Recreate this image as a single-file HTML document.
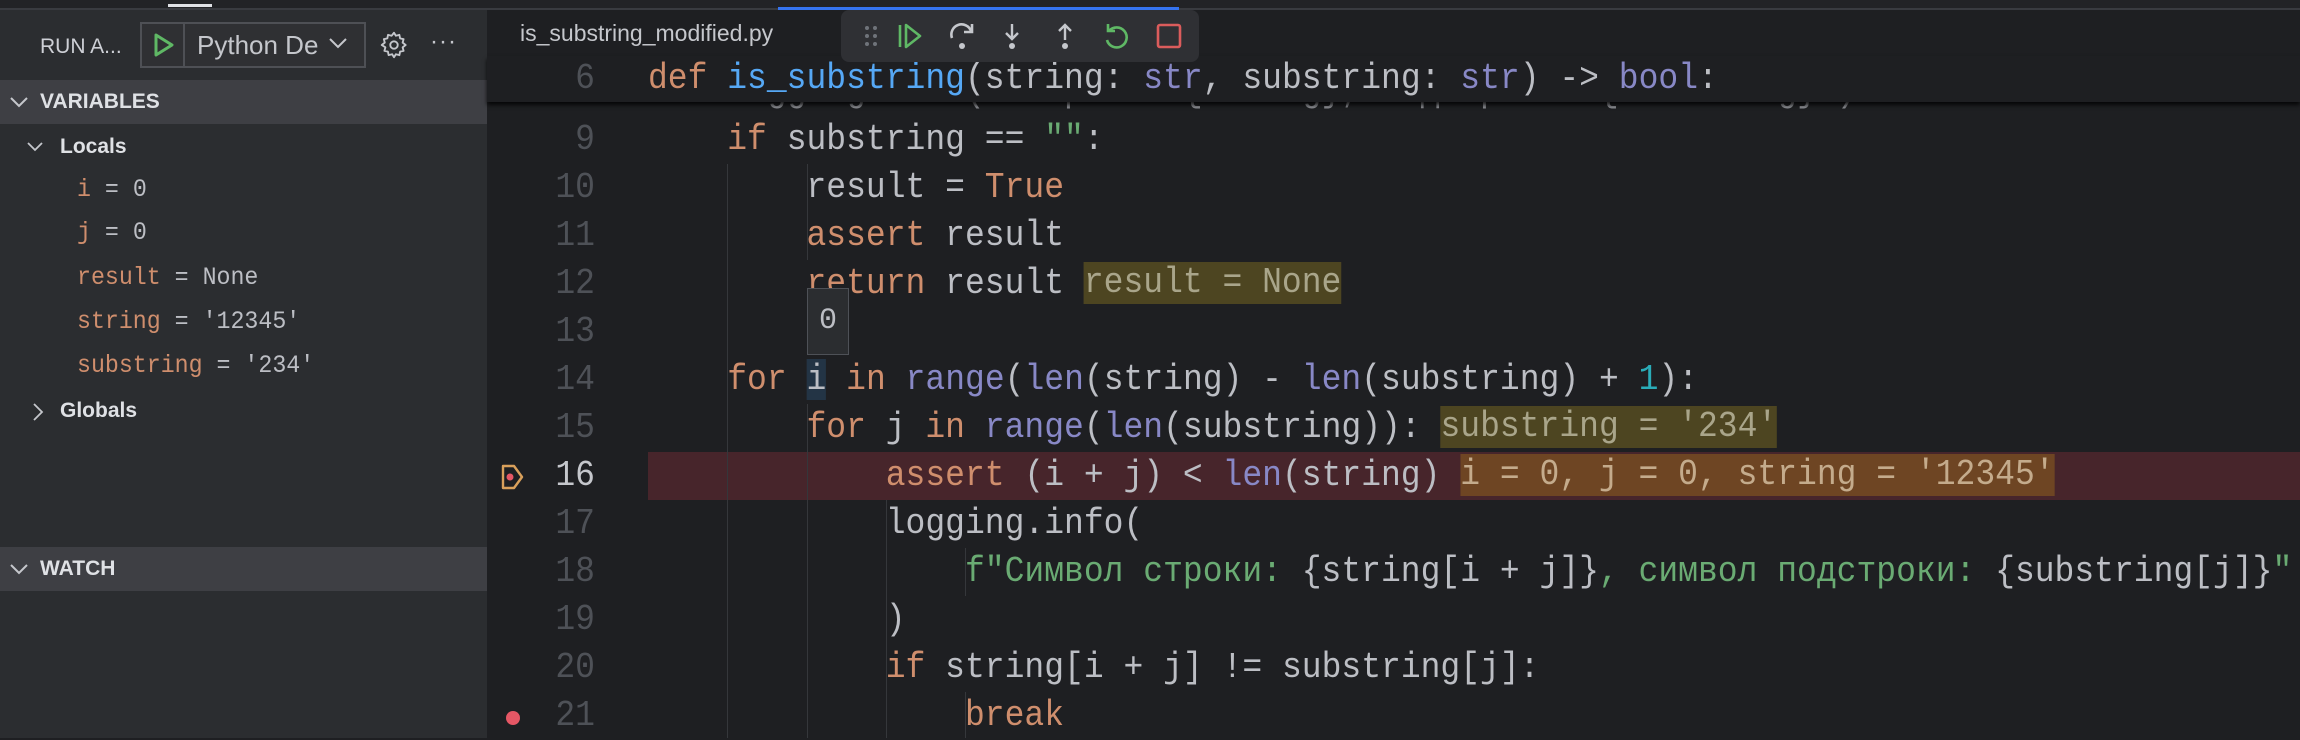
<!DOCTYPE html>
<html><head><meta charset="utf-8"><style>
*{margin:0;padding:0;box-sizing:border-box}
body{width:2300px;height:738px;background:#1e1f22;overflow:hidden;position:relative;font-family:"Liberation Sans",sans-serif}
.abs{position:absolute}
#side{left:0;top:0;width:487px;height:738px;background:#2b2d30}
.ln{position:absolute;left:0;width:595px;text-align:right;font-family:"Liberation Mono",monospace;font-size:36px;color:#4e5157;height:48px;line-height:48px;transform:scaleX(0.917);transform-origin:595px 0}
.cl{position:absolute;left:648px;font-family:"Liberation Mono","DejaVu Sans Mono",monospace;font-size:36px;color:#bcbec4;height:48px;line-height:48px;white-space:pre;transform:scaleX(0.917);transform-origin:0 0}
.k{color:#cf8e6d}.f{color:#56a8f5}.b{color:#8888c6}.n{color:#2aacb8}.s{color:#6aab73}
.iv{display:inline-block;height:42px;line-height:42px;background:#4d4521;color:#a9a58a;vertical-align:middle}
.iv2{background:#6e4523;color:#c4ab8c}
.var{position:absolute;left:77px;font-family:"Liberation Mono",monospace;font-size:25px;color:#bcbec4;white-space:pre;line-height:30px;transform:scaleX(0.93);transform-origin:0 0}
.var .nm{color:#cf8e6d}
.hdr{position:absolute;left:0;width:487px;height:44px;background:#3e3f44;color:#dfe1e5;font-weight:bold;font-size:21px;line-height:44px}
.guide{position:absolute;width:1px;background:#35373b}
</style></head><body>
<div id="side" class="abs"></div>
<div class="abs" style="left:0;top:8px;width:2300px;height:2px;background:#393b40"></div>
<div class="abs" style="left:0;top:0;width:2300px;height:8px;background:#222326"></div>
<div class="abs" style="left:168px;top:4px;width:44px;height:3px;background:#dfe1e5"></div>
<div class="abs" style="left:778px;top:7px;width:401px;height:3px;background:#3574f0"></div>

<div class="abs" style="left:40px;top:32px;font-size:21px;color:#ced0d6;line-height:30px">RUN A...</div>
<div class="abs" style="left:140px;top:22px;width:226px;height:46px;border:2px solid #4e5055;background:#2f3033"></div>
<div class="abs" style="left:183px;top:24px;width:2px;height:42px;background:#4e5055"></div>
<svg class="abs" style="left:152px;top:33px" width="24" height="24" viewBox="0 0 24 24"><path d="M4 2 L20 12 L4 22 Z" fill="none" stroke="#5fb865" stroke-width="3" stroke-linejoin="round"/></svg>
<div class="abs" style="left:197px;top:29px;font-size:26px;color:#c5c7cc;line-height:32px">Python De</div>
<svg class="abs" style="left:329px;top:37px" width="18" height="12" viewBox="0 0 18 12"><path d="M1 2 L9 10 L17 2" fill="none" stroke="#c5c7cc" stroke-width="2"/></svg>
<svg class="abs" style="left:380px;top:31px" width="28" height="28" viewBox="0 0 24 24"><path d="M12 1.5l1.6 2.6 3-.8.6 3 3 .7-.8 3 2.6 2-2.6 2 .8 3-3 .7-.6 3-3-.8L12 22.5l-1.6-2.6-3 .8-.6-3-3-.7.8-3L1.5 12l2.6-2-.8-3 3-.7.6-3 3 .8z" fill="none" stroke="#c5c7cc" stroke-width="1.6" stroke-linejoin="round"/><circle cx="12" cy="12" r="3.2" fill="none" stroke="#c5c7cc" stroke-width="1.6"/></svg>
<div class="abs" style="left:430px;top:28px;font-size:24px;color:#c5c7cc;letter-spacing:1px">···</div>

<div class="hdr" style="top:80px"><span style="position:absolute;left:9px;top:0;font-weight:normal">
<svg width="20" height="14" viewBox="0 0 20 14" style="vertical-align:middle"><path d="M2 3 L10 11 L18 3" fill="none" stroke="#c5c7cc" stroke-width="2"/></svg></span><span style="position:absolute;left:40px">VARIABLES</span></div>
<svg class="abs" style="left:26px;top:140px" width="18" height="14" viewBox="0 0 18 14"><path d="M2 3 L9 10 L16 3" fill="none" stroke="#c5c7cc" stroke-width="1.8"/></svg>
<div class="abs" style="left:60px;top:133px;font-size:21px;font-weight:bold;color:#dfe1e5;line-height:28px">Locals</div>
<div class="var" style="top:175px"><span class="nm">i</span> = 0</div>
<div class="var" style="top:218px"><span class="nm">j</span> = 0</div>
<div class="var" style="top:263px"><span class="nm">result</span> = None</div>
<div class="var" style="top:307px"><span class="nm">string</span> = '12345'</div>
<div class="var" style="top:351px"><span class="nm">substring</span> = '234'</div>
<svg class="abs" style="left:31px;top:402px" width="14" height="20" viewBox="0 0 14 20"><path d="M3 2 L11 10 L3 18" fill="none" stroke="#c5c7cc" stroke-width="1.8"/></svg>
<div class="abs" style="left:60px;top:397px;font-size:21px;font-weight:bold;color:#dfe1e5;line-height:28px">Globals</div>
<div class="hdr" style="top:547px"><span style="position:absolute;left:9px;top:0">
<svg width="20" height="14" viewBox="0 0 20 14" style="vertical-align:middle"><path d="M2 3 L10 11 L18 3" fill="none" stroke="#c5c7cc" stroke-width="2"/></svg></span><span style="position:absolute;left:40px">WATCH</span></div>

<div class="abs" style="left:520px;top:19px;font-size:23px;color:#c5c7cc;line-height:28px">is_substring_modified.py</div>

<div class="abs" style="left:648px;top:452px;width:1652px;height:48px;background:#47252b"></div>

<div class="guide" style="left:727px;top:164px;height:574px"></div>
<div class="guide" style="left:807px;top:164px;height:96px"></div>
<div class="guide" style="left:807px;top:404px;height:334px"></div>
<div class="guide" style="left:886px;top:500px;height:238px"></div>
<div class="guide" style="left:965px;top:548px;height:48px"></div>
<div class="guide" style="left:965px;top:692px;height:46px"></div>

<div class="abs" style="left:0;top:102px;width:2300px;height:12px;overflow:hidden">
<div class="cl" style="top:-34px;color:#8a8c91">    logging.info(f"Строка: {string}, подстрока: {substring}")</div>
</div>

<div class="ln" style="top:116px">9</div><div class="cl" style="top:116px">    <span class="k">if</span> substring == <span class="s">""</span>:</div>
<div class="ln" style="top:164px">10</div><div class="cl" style="top:164px">        result = <span class="k">True</span></div>
<div class="ln" style="top:212px">11</div><div class="cl" style="top:212px">        <span class="k">assert</span> result</div>
<div class="ln" style="top:260px">12</div><div class="cl" style="top:260px">        <span class="k">return</span> result <span class="iv">result = None</span></div>
<div class="ln" style="top:308px">13</div>
<div class="ln" style="top:356px">14</div><div class="cl" style="top:356px">    <span class="k">for</span> <span style="background:#233445">i</span> <span class="k">in</span> <span class="b">range</span>(<span class="b">len</span>(string) - <span class="b">len</span>(substring) + <span class="n">1</span>):</div>
<div class="ln" style="top:404px">15</div><div class="cl" style="top:404px">        <span class="k">for</span> j <span class="k">in</span> <span class="b">range</span>(<span class="b">len</span>(substring)): <span class="iv">substring = '234'</span></div>
<div class="ln" style="top:452px;color:#c5c7cc">16</div><div class="cl" style="top:452px">            <span class="k">assert</span> (i + j) &lt; <span class="b">len</span>(string) <span class="iv iv2">i = 0, j = 0, string = '12345'</span></div>
<div class="ln" style="top:500px">17</div><div class="cl" style="top:500px">            logging.info(</div>
<div class="ln" style="top:548px">18</div><div class="cl" style="top:548px">                <span class="s">f"Символ строки: </span>{string[i + j]}<span class="s">, символ подстроки: </span>{substring[j]}<span class="s">"</span></div>
<div class="ln" style="top:596px">19</div><div class="cl" style="top:596px">            )</div>
<div class="ln" style="top:644px">20</div><div class="cl" style="top:644px">            <span class="k">if</span> string[i + j] != substring[j]:</div>
<div class="ln" style="top:692px">21</div><div class="cl" style="top:692px">                <span class="k">break</span></div>

<svg class="abs" style="left:500px;top:464px" width="26" height="26" viewBox="0 0 26 26"><path d="M3 2 H14 L22 13 L14 24 H3 Z" fill="none" stroke="#d9a05b" stroke-width="2.4" stroke-linejoin="round"/><circle cx="10" cy="13" r="3.5" fill="#e55765"/></svg>
<div class="abs" style="left:506px;top:711px;width:14px;height:14px;border-radius:50%;background:#e55765"></div>

<div class="abs" style="left:807px;top:288px;width:42px;height:67px;background:#2b2d30;border:1px solid #4e5157;font-family:'Liberation Mono',monospace;font-size:30px;color:#bcbec4;text-align:center;line-height:65px">0</div>

<div class="abs" style="left:487px;top:56px;width:1813px;height:46px;background:#1e1f22;box-shadow:0 3px 4px rgba(0,0,0,0.8)"></div>
<div class="ln" style="top:56px;height:46px;line-height:46px">6</div>
<div class="cl" style="top:56px;height:46px;line-height:46px"><span class="k">def</span> <span class="f">is_substring</span>(string: <span class="b">str</span>, substring: <span class="b">str</span>) -&gt; <span class="b">bool</span>:</div>

<div class="abs" style="left:841px;top:10px;width:358px;height:52px;background:#2f3034;border-radius:8px"></div>
<svg class="abs" style="left:841px;top:10px" width="358" height="52" viewBox="841 10 358 52">
<g fill="#6f737a"><circle cx="867" cy="28" r="2"/><circle cx="875" cy="28" r="2"/><circle cx="867" cy="36" r="2"/><circle cx="875" cy="36" r="2"/><circle cx="867" cy="44" r="2"/><circle cx="875" cy="44" r="2"/></g>
<path d="M900 25 V47 M906 25 L920 36 L906 47 Z" fill="none" stroke="#5fb865" stroke-width="2.6" stroke-linejoin="round"/>
<path d="M952 38 A10 10 0 0 1 971 31 M972 24 V32 H964" fill="none" stroke="#c5c7cc" stroke-width="2.6"/>
<circle cx="962" cy="46" r="3" fill="#c5c7cc"/>
<path d="M1012 24 V38 M1006 33 L1012 39 L1018 33" fill="none" stroke="#c5c7cc" stroke-width="2.4"/>
<circle cx="1012" cy="46" r="3" fill="#c5c7cc"/>
<path d="M1065 40 V26 M1059 31 L1065 25 L1071 31" fill="none" stroke="#c5c7cc" stroke-width="2.4"/>
<circle cx="1065" cy="46" r="3" fill="#c5c7cc"/>
<path d="M1109 31 A10 10 0 1 1 1107 40 M1108 24 V31 H1115" fill="none" stroke="#5fb865" stroke-width="2.6"/>
<rect x="1158" y="25" width="22" height="22" rx="2" fill="none" stroke="#db5c5c" stroke-width="2.6"/>
</svg>
</body></html>
